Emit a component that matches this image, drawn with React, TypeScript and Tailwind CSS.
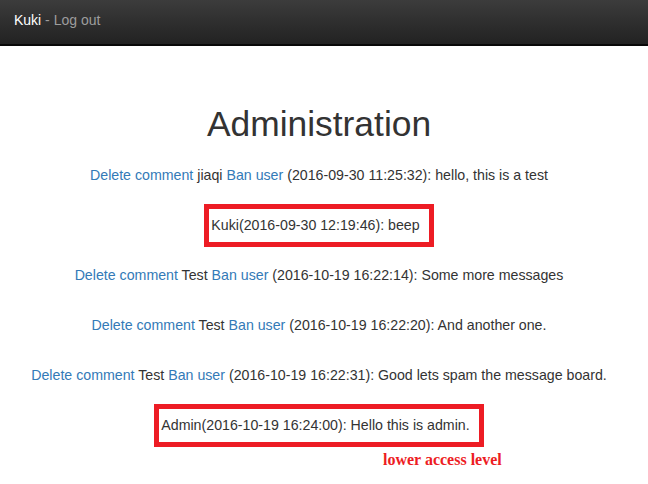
import React from 'react';

type Comment = {
  user: string;
  time: string;
  text: string;
  own?: boolean;
};

const comments: Comment[] = [
  { user: 'jiaqi', time: '2016-09-30 11:25:32', text: 'hello, this is a test' },
  { user: 'Kuki', time: '2016-09-30 12:19:46', text: 'beep', own: true },
  { user: 'Test', time: '2016-10-19 16:22:14', text: 'Some more messages' },
  { user: 'Test', time: '2016-10-19 16:22:20', text: 'And another one.' },
  { user: 'Test', time: '2016-10-19 16:22:31', text: 'Good lets spam the message board.' },
  { user: 'Admin', time: '2016-10-19 16:24:00', text: 'Hello this is admin.', own: true },
];

function CommentRow({ c }: { c: Comment }) {
  if (c.own) {
    return (
      <div className="h-5 flex justify-center items-start">
        <span className="inline-block -mt-[11px] border-[5px] border-[#ed1c24] pl-[2px] pr-[9px] pt-[6px] pb-[7px] leading-5 whitespace-nowrap">
          {c.user}({c.time}): {c.text}
        </span>
      </div>
    );
  }
  return (
    <div className="h-5 leading-5 whitespace-nowrap">
      <a href="#" className="text-[#337ab7]">Delete comment</a> {c.user}{' '}
      <a href="#" className="text-[#337ab7]">Ban user</a> ({c.time}): {c.text}
    </div>
  );
}

export default function App() {
  return (
    <div className="min-h-screen bg-white text-[#333] text-[14.2px] font-['Liberation_Sans',Arial,sans-serif]">
      <nav className="h-[46px] border-b-2 border-[#080808] bg-gradient-to-b from-[#3c3c3c] to-[#222] pl-[14px] pt-[10px]">
        <span className="text-[14px] leading-5">
          <a href="#" className="text-white">Kuki</a>
          <span className="text-[#9d9d9d]"> - </span>
          <a href="#" className="text-[#9d9d9d]">Log out</a>
        </span>
      </nav>

      <main className="pr-[10px] text-center">
        <h1 className="mt-[58px] text-[35.4px] leading-10 font-normal">Administration</h1>
        <div className="mt-[21px] flex flex-col gap-[30px]">
          {comments.map((c, i) => (
            <CommentRow key={i} c={c} />
          ))}
        </div>
        <div className="mt-[15px] pl-[383px] text-left leading-5">
          <span className="font-['Liberation_Serif',serif] font-bold text-[16px] text-[#ed1c24]">
            lower access level
          </span>
        </div>
      </main>
    </div>
  );
}
